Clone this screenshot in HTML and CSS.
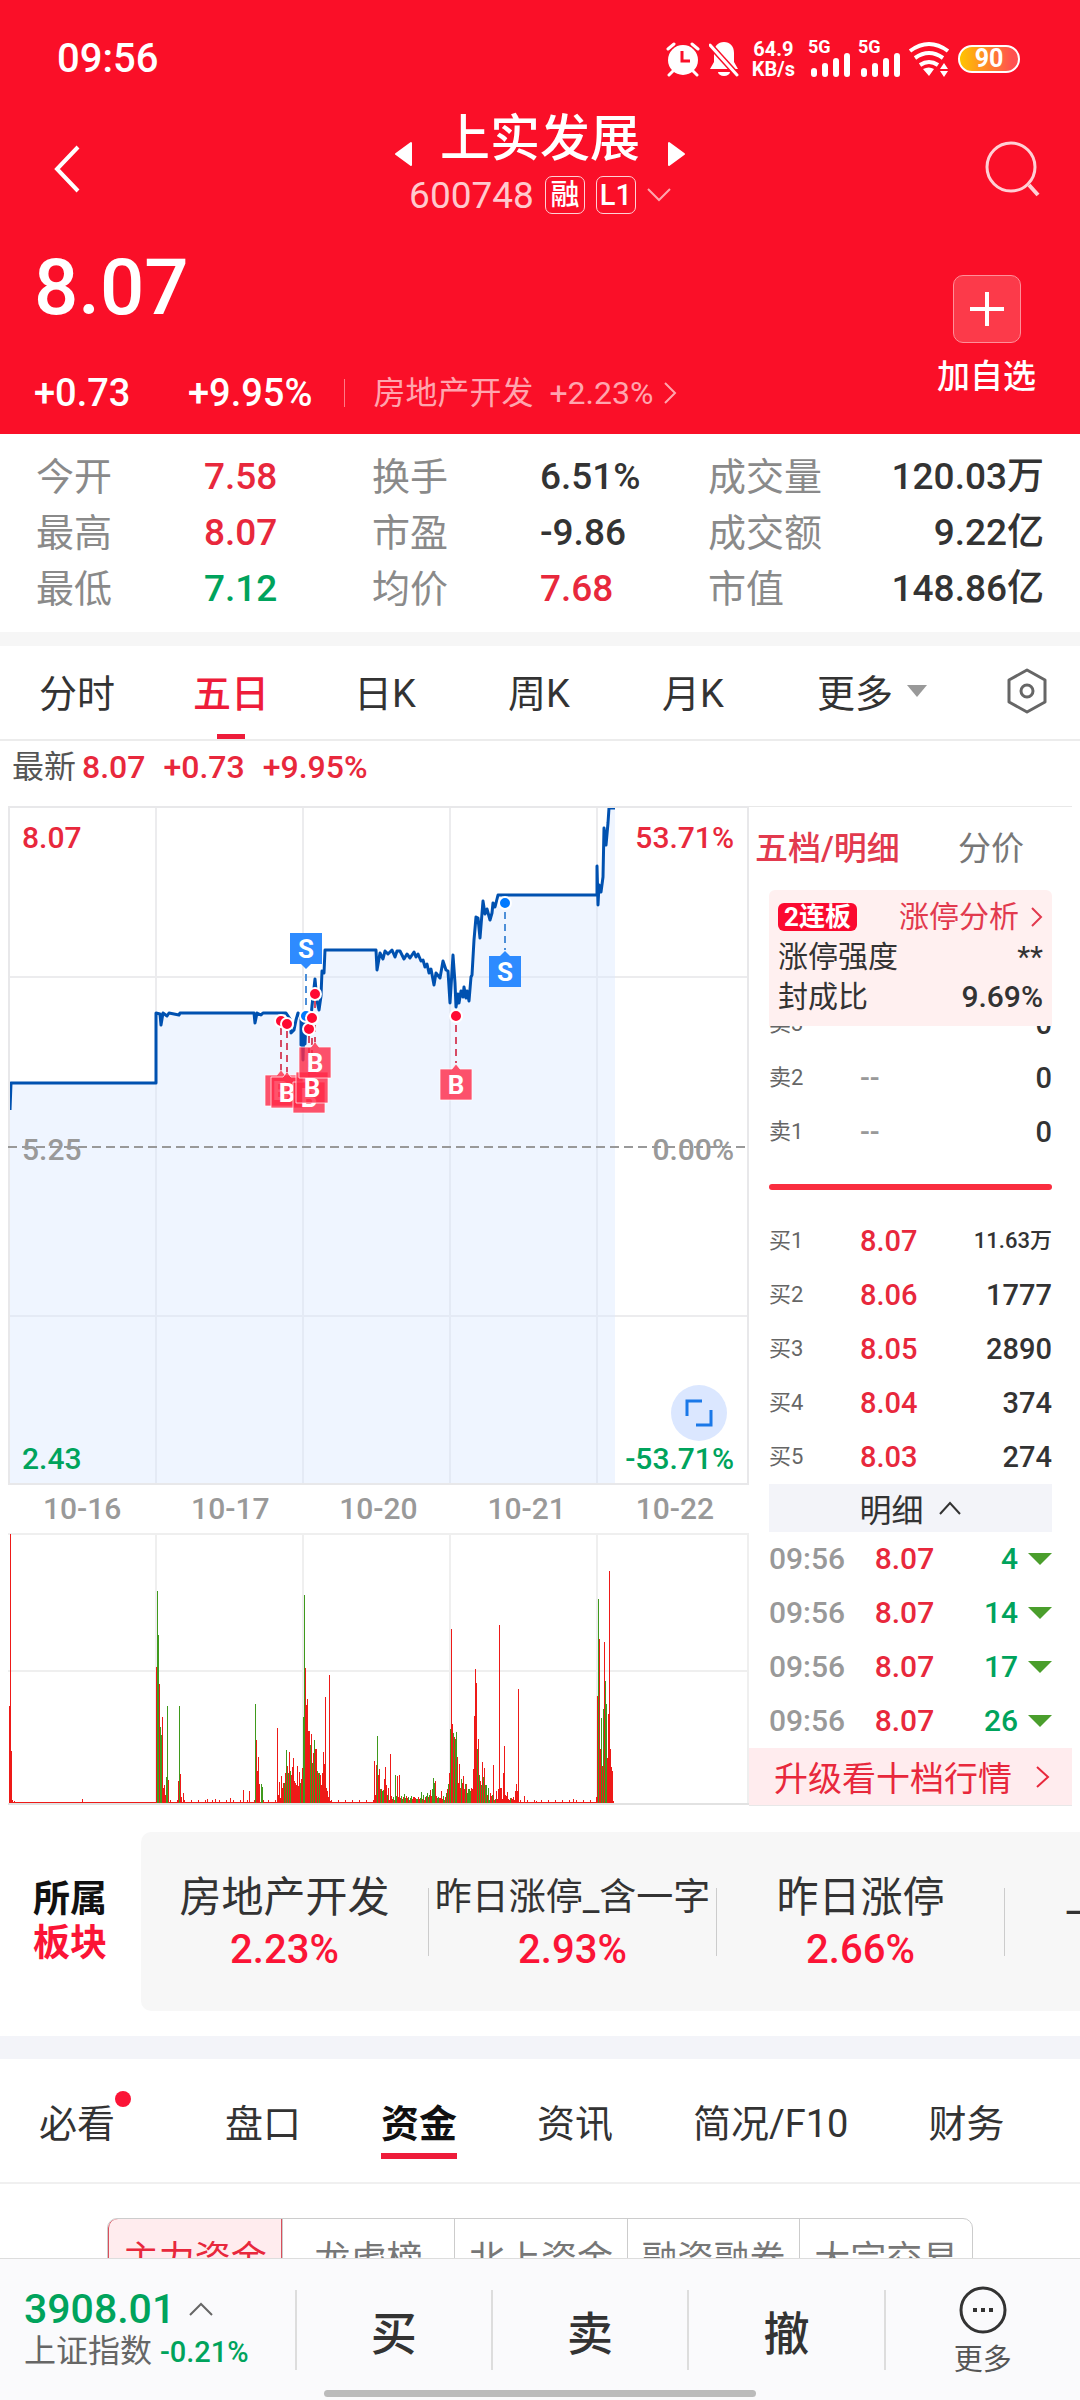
FILE: index.html
```html
<!DOCTYPE html>
<html lang="zh-CN">
<head>
    <meta charset="UTF-8">
    <meta name="viewport" content="width=device-width, initial-scale=1.0">
    <title>上实发展 600748</title>
    <link rel="stylesheet" href="styles.css">
</head>
<body>
    <header class="header">
        <div class="status-bar">
            <span class="clock">09:56</span>
            <div class="status-icons">
                <svg width="36" height="36" viewBox="0 0 36 36">
                    <circle cx="18" cy="19" r="15" fill="#fff"/>
                    <path d="M3 8l6-5M33 8l-6-5M8 30l-4 4M28 30l4 4" stroke="#fff" stroke-width="3" stroke-linecap="round"/>
                    <path d="M17 10v10h8" stroke="#fa0f28" stroke-width="3" fill="none"/>
                </svg>
                <svg width="30" height="36" viewBox="0 0 30 36">
                    <path d="M15 1c6 0 10 4 10 11v9l4 7H1l4-7v-9C5 5 9 1 15 1zM9 31h12a6 4 0 0 1-12 0z" fill="#fff"/>
                    <path d="M0 3l29 32" stroke="#fa0f28" stroke-width="6"/>
                    <path d="M1 4l27 30" stroke="#fff" stroke-width="3" stroke-linecap="round"/>
                </svg>
                <span class="speed">64.9<br>KB/s</span>
                <span class="signal">
                    <b>5G</b>
                    <svg width="42" height="24" viewBox="0 0 42 24"><path d="M6 21v-3M17 21v-8M28 21V8M39 21V3" stroke="#fff" stroke-width="6" stroke-linecap="round"/></svg>
                </span>
                <span class="signal">
                    <b>5G</b>
                    <svg width="42" height="24" viewBox="0 0 42 24"><path d="M6 21v-3M17 21v-8M28 21V8M39 21V3" stroke="#fff" stroke-width="6" stroke-linecap="round"/></svg>
                </span>
                <svg width="42" height="36" viewBox="0 0 42 36">
                    <path d="M2 10Q21-4 40 10M7 17q14-10 28 0M12 24q9-6 18 0" stroke="#fff" stroke-width="4" fill="none"/>
                    <path d="M15 28q6-3 11 0l-5 7zM32 28l4-6 4 6zM32 30l4 6 4-6z" fill="#fff"/>
                </svg>
                <span class="battery">90</span>
            </div>
        </div>

        <nav class="title-bar">
            <button class="icon-btn back" aria-label="返回">
                <svg width="26" height="48" viewBox="0 0 26 48"><path d="M24 2L3 24l21 22" stroke="#fff" stroke-width="4" fill="none"/></svg>
            </button>
            <div class="title">
                <div class="name-row">
                    <svg width="18" height="26" viewBox="0 0 18 26"><path d="M17 2v22L2 13z" fill="#fff" stroke="#fff" stroke-width="2" stroke-linejoin="round"/></svg>
                    <h1>上实发展</h1>
                    <svg width="18" height="26" viewBox="0 0 18 26"><path d="M1 2v22l15-11z" fill="#fff" stroke="#fff" stroke-width="2" stroke-linejoin="round"/></svg>
                </div>
                <div class="code-row">
                    <span class="code">600748</span>
                    <span class="badge">融</span>
                    <span class="badge">L1</span>
                    <svg width="24" height="14" viewBox="0 0 24 14"><path d="M1 1l11 11L23 1" stroke="#ffa5ae" stroke-width="2" fill="none"/></svg>
                </div>
            </div>
            <button class="icon-btn" aria-label="搜索">
                <svg width="56" height="58" viewBox="0 0 56 58"><circle cx="27" cy="27" r="24" stroke="#ffd0d5" stroke-width="3" fill="none"/><path d="M45 45l9 10" stroke="#ffd0d5" stroke-width="4"/></svg>
            </button>
        </nav>

        <div class="quote">
            <div>
                <div class="price">8.07</div>
                <div class="change">
                    <span class="diff">+0.73</span>
                    <span>+9.95%</span>
                    <a class="industry" href="#">
                        <span>房地产开发</span>
                        <span>+2.23%</span>
                        <svg width="14" height="22" viewBox="0 0 14 22"><path d="M2 1l10 10L2 21" stroke="#ffa5ae" stroke-width="2" fill="none"/></svg>
                    </a>
                </div>
            </div>
            <button class="add-btn">
                <span class="add-icon">
                    <svg width="34" height="34" viewBox="0 0 34 34"><path d="M17 0v34M0 17h34" stroke="#fff" stroke-width="4"/></svg>
                </span>
                加自选
            </button>
        </div>
    </header>

    <dl class="stats">
        <dt>今开</dt><dd class="up">7.58</dd>
        <dt>换手</dt><dd>6.51%</dd>
        <dt>成交量</dt><dd class="right">120.03万</dd>
        <dt>最高</dt><dd class="up">8.07</dd>
        <dt>市盈</dt><dd>-9.86</dd>
        <dt>成交额</dt><dd class="right">9.22亿</dd>
        <dt>最低</dt><dd class="down">7.12</dd>
        <dt>均价</dt><dd class="up">7.68</dd>
        <dt>市值</dt><dd class="right">148.86亿</dd>
    </dl>

    <nav class="period-tabs">
        <button>分时</button>
        <button class="active">五日</button>
        <button>日K</button>
        <button>周K</button>
        <button>月K</button>
        <button class="more">更多
            <svg width="20" height="14" viewBox="0 0 20 14"><path d="M0 1h20L10 13z" fill="#999"/></svg>
        </button>
        <button class="settings" aria-label="设置">
            <svg width="42" height="46" viewBox="0 0 42 46"><path d="M21 2l18 10v22L21 44 3 34V12z" stroke="#666" stroke-width="3" fill="none" stroke-linejoin="round"/><circle cx="21" cy="23" r="6" stroke="#666" stroke-width="3" fill="none"/></svg>
        </button>
    </nav>

    <div class="latest"><span>最新</span><span class="up">8.07</span><span class="up">+0.73</span><span class="up">+9.95%</span></div>

    <main class="market">
        <section class="charts">
            <div class="price-chart">
                <svg viewBox="0 0 741 679">
                    <defs>
                        <g id="buy">
                            <path d="M-16 1h12l4-5 4 5h12v31h-32z" fill="#ff2846" fill-opacity=".8" stroke="#fff" stroke-opacity=".7"/>
                            <text x="0" y="26" class="tag-text">B</text>
                        </g>
                        <g id="sell">
                            <rect x="-16" y="0" width="32" height="31" fill="#2e8bff"/>
                            <text x="0" y="25" class="tag-text">S</text>
                        </g>
                    </defs>
                    <path d="M0 171H741M0 510H741M148 0V679M295 0V679M442 0V679M589 0V679" stroke="#ececee" stroke-width="2"/>
                    <path id="price-area" fill="#d8e8ff" fill-opacity=".42"/>
                    <path id="price-line" fill="none" stroke="#0051b0" stroke-width="3" stroke-linejoin="round"/>
                    <rect x="1" y="1" width="739" height="677" fill="none" stroke="#e8e8ea" stroke-width="2"/>
                    <path d="M0 341H741" stroke="#999" stroke-width="2" stroke-dasharray="9 5"/>
                    <path d="M273 222v44M279 225v44M301 230v42M304 220v46M307 195v46M448 219v38" stroke="#d64a64" stroke-width="2" stroke-dasharray="7 5"/>
                    <path d="M298 168v38M497 106v38" stroke="#4d8fd8" stroke-width="2" stroke-dasharray="7 5"/>
                    <g stroke="#fff" stroke-width="2">
                        <g fill="#007aff">
                            <circle cx="298" cy="210" r="6"/>
                            <circle cx="497" cy="97" r="6"/>
                        </g>
                        <g fill="#ff0a32">
                            <circle cx="273" cy="215" r="6"/>
                            <circle cx="279" cy="218" r="6"/>
                            <circle cx="301" cy="223" r="6"/>
                            <circle cx="304" cy="212" r="6"/>
                            <circle cx="307" cy="188" r="6"/>
                            <circle cx="448" cy="210" r="6"/>
                        </g>
                    </g>
                    <use href="#buy" x="273" y="268"/>
                    <use href="#buy" x="279" y="270"/>
                    <use href="#buy" x="301" y="275"/>
                    <use href="#buy" x="304" y="265"/>
                    <use href="#buy" x="307" y="240"/>
                    <use href="#buy" x="448" y="262"/>
                    <use href="#sell" x="298" y="127"/>
                    <path d="M293 158h10l-5 5z" fill="#2e8bff"/>
                    <use href="#sell" x="497" y="150"/>
                    <path d="M492 150h10l-5-5z" fill="#2e8bff"/>
                </svg>
                <span class="axis top left up">8.07</span>
                <span class="axis top right up">53.71%</span>
                <span class="axis middle left">5.25</span>
                <span class="axis middle right">0.00%</span>
                <span class="axis bottom left down">2.43</span>
                <span class="axis bottom right down">-53.71%</span>
                <button class="expand" aria-label="全屏">
                    <svg width="28" height="28" viewBox="0 0 28 28"><path d="M2 17V2h15M26 11v15H11" stroke="#1a78e8" stroke-width="3" fill="none"/></svg>
                </button>
            </div>
            <div class="dates"><span>10-16</span><span>10-17</span><span>10-20</span><span>10-21</span><span>10-22</span></div>
            <svg class="volume-chart" viewBox="0 0 741 272">
                <path d="M0 1H741M0 138H741M148 0V271M295 0V271M442 0V271M589 0V271M740 0V271" stroke="#efefef" stroke-width="2"/>
                <path d="M0 271H741" stroke="#e2e2e2" stroke-width="2"/>
                <path id="volume-up" stroke="#ee1a18" stroke-width="1"/>
                <path id="volume-down" stroke="#3f9a1c" stroke-width="1"/>
            </svg>
        </section>

        <aside class="book">
            <div class="book-tabs">
                <button class="active">五档/明细</button>
                <button>分价</button>
            </div>
            <div class="limit-card">
                <a class="limit-row" href="#">
                    <span class="pill">2连板</span>
                    <span class="limit-link">涨停分析
                        <svg width="12" height="20" viewBox="0 0 12 20"><path d="M1 1l9 9-9 9" stroke="#e23a4e" stroke-width="2" fill="none"/></svg>
                    </span>
                </a>
                <div class="limit-row"><span>涨停强度</span><span>**</span></div>
                <div class="limit-row"><span>封成比</span><span class="num">9.69%</span></div>
            </div>
            <div class="sells">
                <table class="orders">
                    <tr><th>卖3</th><td class="none">--</td><td>0</td></tr>
                    <tr><th>卖2</th><td class="none">--</td><td>0</td></tr>
                    <tr><th>卖1</th><td class="none">--</td><td>0</td></tr>
                </table>
            </div>
            <div class="ratio"></div>
            <table class="orders">
                <tr><th>买1</th><td class="up">8.07</td><td class="small">11.63万</td></tr>
                <tr><th>买2</th><td class="up">8.06</td><td>1777</td></tr>
                <tr><th>买3</th><td class="up">8.05</td><td>2890</td></tr>
                <tr><th>买4</th><td class="up">8.04</td><td>374</td></tr>
                <tr><th>买5</th><td class="up">8.03</td><td>274</td></tr>
            </table>
            <button class="detail-btn">明细
                <svg width="24" height="14" viewBox="0 0 24 14"><path d="M2 13L12 2l10 11" stroke="#333" stroke-width="2" fill="none"/></svg>
            </button>
            <table class="ticks">
                <tr><td>09:56</td><td class="up">8.07</td><td class="down">4</td></tr>
                <tr><td>09:56</td><td class="up">8.07</td><td class="down">14</td></tr>
                <tr><td>09:56</td><td class="up">8.07</td><td class="down">17</td></tr>
                <tr><td>09:56</td><td class="up">8.07</td><td class="down">26</td></tr>
            </table>
            <a class="upgrade" href="#">升级看十档行情
                <svg width="14" height="24" viewBox="0 0 14 24"><path d="M1 2l11 10L1 22" stroke="#e8283c" stroke-width="2" fill="none"/></svg>
            </a>
        </aside>
    </main>

    <section class="sectors">
        <h2>所属<br><em>板块</em></h2>
        <div class="sector-list">
            <a href="#"><span>房地产开发</span><b>2.23%</b></a>
            <a href="#"><span class="long">昨日涨停_含一字</span><b>2.93%</b></a>
            <a href="#"><span>昨日涨停</span><b>2.66%</b></a>
            <a href="#"><span>上海板块</span></a>
        </div>
    </section>

    <nav class="info-tabs">
        <button class="dot">必看</button>
        <button>盘口</button>
        <button class="active">资金</button>
        <button>资讯</button>
        <button>简况/F10</button>
        <button>财务</button>
    </nav>

    <div class="segments">
        <button class="active">主力资金</button>
        <button>龙虎榜</button>
        <button>北上资金</button>
        <button>融资融券</button>
        <button>大宗交易</button>
    </div>

    <footer class="trade-bar">
        <div class="trade-items">
            <a class="index" href="#">
                <span class="index-value">3908.01
                    <svg width="24" height="14" viewBox="0 0 24 14"><path d="M1 13L12 2l11 11" stroke="#666" stroke-width="2" fill="none"/></svg>
                </span>
                <span class="index-name">上证指数 <b>-0.21%</b></span>
            </a>
            <button>买</button>
            <button>卖</button>
            <button>撤</button>
            <button class="trade-more">
                <svg width="48" height="48" viewBox="0 0 48 48"><circle cx="24" cy="24" r="22" stroke="#333" stroke-width="3" fill="none"/><path d="M14 22h4v4h-4zM22 22h4v4h-4zM30 22h4v4h-4z" fill="#333"/></svg>
                更多
            </button>
        </div>
        <div class="home-indicator"></div>
    </footer>

    <script>
        const prices = [
            [1,304],[2,277],[147,277],[147,207],[151,208],[152,219],[154,207],[158,210],[160,207],[170,209],[171,207],
            [245,207],[246,217],[248,207],[252,209],[254,207],[277,207],[281,213],[282,227],[285,224],[287,214],[289,207],
            [292,211],[292,239],[293,208],[294,254],[295,216],[296,238],[297,214],[301,222],[303,200],[306,173],[308,195],[310,204],
            [312,190],[313,165],[315,167],[316,144],[367,144],[368,164],[371,147],[374,153],[376,145],[379,148],[383,144],
            [386,151],[388,145],[391,145],[395,153],[398,148],[401,152],[405,146],[407,151],[409,148],[412,155],[414,154],
            [416,161],[418,158],[420,167],[422,163],[425,179],[427,167],[431,172],[434,155],[437,164],[439,165],[441,197],
            [444,149],[446,177],[447,201],[449,188],[450,197],[452,185],[454,191],[455,181],[457,192],[458,185],[460,195],
            [462,171],[463,169],[465,134],[467,111],[469,112],[471,132],[474,95],[476,108],[478,103],[481,114],[483,107],
            [484,97],[486,101],[489,89],[588,89],[588,60],[589,99],[590,79],[592,86],[594,71],[595,22],[597,39],[599,17],
            [600,2],[606,2]
        ];
        const line = 'M' + prices.map(([x, y]) => `${x + 1} ${y}`).join('L');
        document.getElementById('price-line').setAttribute('d', line);
        document.getElementById('price-area').setAttribute('d', line + 'V679H2Z');

        // x position: volume height, for rising and falling minutes
        const up = {
            0:97, 1:269, 2:52, 3:3, 5:2, 73:4, 147:136, 150:119, 153:86, 154:15, 155:18, 156:8, 159:23, 169:22, 171:29, 172:6, 174:10,
            198:4, 206:4, 221:5, 234:13, 240:12, 247:63, 248:32, 249:46, 250:19, 254:3, 268:75, 269:8, 270:21, 272:27, 273:15, 274:20, 276:30,
            278:37, 280:51, 282:28, 283:36, 284:45, 285:22, 286:20, 287:18, 288:37, 289:17, 290:31, 292:24, 293:35, 296:135,
            297:98, 298:104, 299:72, 300:72, 302:69, 304:50, 306:54, 307:54, 309:30, 311:28, 312:18, 313:30, 314:51, 315:39, 316:106,
            317:15, 318:12, 319:6, 320:128, 321:2, 365:42, 366:8, 367:38, 369:28, 370:34, 372:14, 375:24, 376:36, 377:18, 379:15, 381:49,
            388:27, 390:28, 398:5, 405:6, 410:4, 416:6, 421:13, 426:22, 430:5, 432:12, 436:6, 438:14, 440:30, 442:174,
            443:79, 445:66, 448:46, 449:20, 450:39, 451:15, 453:20, 454:27, 455:14, 457:19, 462:15, 463:14, 464:34, 465:87, 466:134,
            467:120, 469:64, 471:22, 473:41, 475:35, 478:8, 481:10, 484:38, 487:12, 489:14, 490:178, 491:15, 492:15, 494:30, 495:57, 496:8,
            498:11, 499:4, 502:5, 504:6, 506:12, 507:19, 508:12, 509:114, 515:7, 527:2, 564:4, 587:6, 588:107, 590:164, 591:54, 593:37, 595:161,
            598:45, 599:89, 600:232, 601:54, 602:36, 603:32, 604:2
        };
        const down = {
            148:212, 149:168, 151:76, 152:68, 157:26, 158:97, 170:97, 246:99, 252:19, 253:16, 275:20, 277:53, 279:30, 281:32,
            291:20, 294:86, 295:208, 301:58, 303:40, 305:63, 308:32, 310:30, 368:67, 371:14, 373:12, 374:13, 378:8, 386:28, 392:7,
            395:9, 401:5, 407:4, 412:11, 414:8, 418:10, 420:8, 423:14, 424:25, 425:20, 428:5, 434:7, 437:10, 439:19, 441:74, 444:70,
            446:64, 447:71, 452:24, 456:19, 458:10, 459:14, 460:14, 461:12, 468:54, 470:28, 472:18, 474:26, 476:18, 477:18, 479:15,
            483:8, 486:4, 589:204, 592:85, 594:94, 596:122, 597:99
        };
        // quiet minutes still trade a little
        for (let x = 4; x < 605; x++) {
            if (up[x] || down[x]) continue;
            if (x > 268 && x < 320 || x > 368 && x < 508) {
                (x % 3 ? up : down)[x] = 3 + x * 7 % 5;
            } else {
                up[x] = x % 7 ? 1 : (x > 160 ? 3 : 1);
            }
        }
        const bars = data => Object.entries(data).map(([x, h]) => `M${+x + 1.5} 270v-${h}`).join('');
        document.getElementById('volume-up').setAttribute('d', bars(up));
        document.getElementById('volume-down').setAttribute('d', bars(down));
    </script>
</body>
</html>
```
FILE: styles.css
```css
* {
    box-sizing: border-box;
}

body {
    margin: 0;
    font-family: Roboto, "Noto Sans CJK SC", sans-serif;
    background-color: #fff;
    color: #333;
    padding-bottom: 142px;
}

button {
    border: none;
    background: none;
    padding: 0;
    font: inherit;
    color: inherit;
    cursor: pointer;
}

a {
    color: inherit;
    text-decoration: none;
}

svg {
    display: block;
    flex: none;
}

.up {
    color: #e8283c;
}

.down {
    color: #00a35c;
}

.header {
    background-color: #fa0f28;
    color: #fff;
    padding-bottom: 17px;
}

.status-bar {
    display: flex;
    justify-content: space-between;
    align-items: center;
    padding: 35px 60px 24px 57px;
    line-height: 48px;
}

.clock {
    font-size: 40px;
    font-weight: 500;
}

.status-icons {
    display: flex;
    align-items: center;
    gap: 8px;
}

.speed {
    font-size: 20px;
    font-weight: 700;
    line-height: 20px;
    text-align: center;
    padding: 0 5px;
}

.signal b {
    display: block;
    font-size: 18px;
    line-height: 12px;
}

.battery {
    width: 62px;
    height: 28px;
    border: 2px solid #fff;
    border-radius: 14px;
    background: linear-gradient(90deg, #ffc400, #ff5050 90%);
    font-size: 25px;
    font-weight: 700;
    line-height: 24px;
    text-align: center;
}

.title-bar {
    display: flex;
    justify-content: space-between;
    align-items: center;
    height: 112px;
    padding: 0 40px 0 54px;
}

.icon-btn {
    width: 56px;
    padding-top: 12px;
}

.back {
    width: 42px;
}

.name-row {
    display: flex;
    justify-content: center;
    align-items: flex-end;
    gap: 28px;
    height: 64px;
}

.name-row svg {
    margin-bottom: 4px;
}

.title h1 {
    margin: 0;
    font-size: 50px;
    font-weight: 500;
    line-height: 64px;
}

.code-row {
    display: flex;
    justify-content: center;
    align-items: center;
    gap: 11px;
    height: 48px;
}

.code {
    font-size: 37px;
    color: #ffc9ce;
}

.badge {
    width: 40px;
    height: 38px;
    border: 1px solid #ffd0d5;
    border-radius: 7px;
    font-size: 29px;
    font-weight: 500;
    line-height: 36px;
    text-align: center;
}

.quote {
    display: flex;
    justify-content: space-between;
    padding: 20px 44px 0 34px;
}

.price {
    font-size: 78px;
    font-weight: 500;
    line-height: 98px;
}

.change {
    display: flex;
    align-items: center;
    margin-top: 32px;
    font-size: 38px;
    font-weight: 500;
    line-height: 48px;
}

.diff {
    width: 154px;
}

.industry {
    display: flex;
    align-items: center;
    gap: 16px;
    margin-left: 32px;
    padding-left: 28px;
    border-left: 1px solid #ff7a86;
    font-size: 32px;
    font-weight: 400;
    line-height: 28px;
    color: #ffa5ae;
}

.industry svg {
    margin-left: -6px;
}

.add-btn {
    display: flex;
    flex-direction: column;
    align-items: center;
    gap: 10px;
    padding-top: 36px;
    font-size: 33px;
    font-weight: 500;
    line-height: 48px;
}

.add-icon {
    display: flex;
    justify-content: center;
    align-items: center;
    width: 68px;
    height: 68px;
    border: 1px solid #ff8f99;
    border-radius: 10px;
    background-color: #fc3a4a;
}

.stats {
    display: grid;
    grid-template-columns: repeat(6, 1fr);
    margin: 0;
    padding: 15px 36px;
    line-height: 56px;
    border-bottom: 14px solid #f6f6f6;
}

.stats dt {
    font-size: 38px;
    color: #8a8a8a;
}

.stats dd {
    margin: 0;
    font-size: 37px;
    font-weight: 500;
    white-space: nowrap;
}

.stats .right {
    display: flex;
    justify-content: flex-end;
}

.period-tabs {
    display: flex;
    height: 95px;
    border-bottom: 2px solid #ececec;
    font-size: 38px;
}

.period-tabs button {
    flex: 154;
    padding-bottom: 4px;
}

.period-tabs .active {
    color: #ee1c3a;
    font-weight: 500;
    background: linear-gradient(#ee1c3a, #ee1c3a) bottom / 28px 5px no-repeat;
}

.period-tabs .more {
    display: flex;
    justify-content: center;
    align-items: center;
    gap: 14px;
    flex: 204;
}

.period-tabs .settings {
    display: flex;
    justify-content: center;
    align-items: center;
    flex: 106;
}

.latest {
    display: flex;
    gap: 18px;
    padding: 0 12px;
    font-size: 32px;
    font-weight: 500;
    line-height: 52px;
    margin-bottom: 13px;
}

.latest span:first-child {
    margin-right: -12px;
    font-weight: 400;
    color: #555;
}

.market {
    display: flex;
    align-items: flex-start;
    padding: 0 8px;
}

.charts {
    flex: 1;
}

.price-chart {
    position: relative;
}

.price-chart > svg,
.volume-chart {
    width: 100%;
}

.tag-text {
    font-size: 26px;
    font-weight: 700;
    fill: #fff;
    text-anchor: middle;
}

.axis {
    position: absolute;
    font-size: 30px;
    font-weight: 500;
    line-height: 36px;
}

.axis.top {
    top: 14px;
}

.axis.middle {
    top: 50%;
    margin-top: -14px;
    color: #999;
}

.axis.bottom {
    bottom: 8px;
}

.axis.left {
    left: 14px;
}

.axis.right {
    right: 15px;
}

.expand {
    position: absolute;
    right: 22px;
    bottom: 44px;
    display: flex;
    justify-content: center;
    align-items: center;
    width: 56px;
    height: 56px;
    border-radius: 50%;
    background-color: #dbe7ff;
}

.dates {
    display: flex;
    justify-content: space-around;
    font-size: 30px;
    font-weight: 500;
    line-height: 48px;
    color: #999;
}

.book {
    width: 323px;
    border-top: 1px solid #e8e8e8;
    border-bottom: 1px solid #e8e8e8;
}

.book-tabs {
    display: flex;
    justify-content: space-between;
    padding: 0 48px 0 6px;
    font-size: 33px;
    line-height: 83px;
    color: #777;
}

.book-tabs .active {
    color: #e23a4e;
    font-weight: 500;
}

.limit-card {
    margin: 0 20px;
    padding: 7px 9px 9px;
    border-radius: 6px 6px 0 0;
    background-color: #fff0f0;
    font-size: 30px;
}

.limit-row {
    display: flex;
    justify-content: space-between;
    align-items: center;
    line-height: 40px;
}

.limit-row .num {
    font-weight: 500;
}

.pill {
    padding: 0 6px;
    border-radius: 6px;
    background-color: #fb0a30;
    color: #fff;
    font-size: 26px;
    font-weight: 700;
    line-height: 28px;
}

.limit-link {
    display: flex;
    align-items: center;
    gap: 12px;
    color: #e23a4e;
}

/* the list is scrolled, its first row shows only the lower part */
.sells {
    display: flex;
    flex-direction: column;
    justify-content: flex-end;
    height: 133px;
    overflow: hidden;
}

.orders,
.ticks {
    margin: 0 20px;
    width: 283px;
    border-collapse: collapse;
    font-weight: 500;
}

.orders td,
.orders th,
.ticks td {
    height: 54px;
    padding: 0;
    line-height: 54px;
}

.orders th {
    width: 91px;
    font-size: 22px;
    font-weight: 400;
    text-align: left;
    color: #666;
}

.orders td {
    font-size: 29px;
}

.orders td:last-child {
    text-align: right;
}

.orders .none {
    color: #999;
}

.orders td.small {
    font-size: 22px;
}

.ratio {
    height: 6px;
    margin: 25px 20px 24px;
    border-radius: 3px;
    background-color: #fa2d3f;
}

.detail-btn {
    display: flex;
    justify-content: center;
    align-items: center;
    gap: 14px;
    width: 283px;
    height: 48px;
    margin: 0 20px;
    background-color: #f3f4f9;
    font-size: 32px;
}

.ticks {
    font-size: 30px;
    color: #999;
}

.ticks td:last-child {
    text-align: right;
}

.ticks td:last-child::after {
    content: "";
    display: inline-block;
    margin-left: 10px;
    border: 12px solid transparent;
    border-top-color: #4a9e2c;
    border-bottom: none;
    vertical-align: 4px;
}

.upgrade {
    display: flex;
    justify-content: space-between;
    align-items: center;
    height: 57px;
    padding: 0 22px 0 25px;
    background-color: #ffecee;
    font-size: 34px;
    color: #e8283c;
}

.sectors {
    display: flex;
    align-items: center;
    padding: 26px 0 25px 33px;
    border-bottom: 23px solid #f3f4f9;
    overflow: hidden;
}

.sectors h2 {
    flex: none;
    width: 108px;
    margin: 0;
    font-size: 37px;
    line-height: 44px;
    color: #111;
}

.sectors em {
    font-style: normal;
    color: #fb1436;
}

.sector-list {
    display: flex;
    flex: 1;
    min-width: 0;
    height: 179px;
    border-radius: 10px 0 0 10px;
    background-color: #f7f7f7;
    overflow: hidden;
}

.sector-list a {
    flex: 0 0 288px;
    display: flex;
    flex-direction: column;
    align-items: center;
    height: 68px;
    margin-top: 56px;
    border-right: 1px solid #ccc;
    white-space: nowrap;
}

.sector-list span {
    margin-top: -16px;
    font-size: 42px;
    line-height: 52px;
}

.sector-list .long {
    font-size: 37px;
}

.sector-list b {
    font-size: 40px;
    font-weight: 500;
    line-height: 52px;
    color: #fb1436;
}

.info-tabs {
    display: flex;
    gap: 80px;
    height: 125px;
    padding: 28px 39px 23px;
    border-bottom: 2px solid #f0f0f0;
    font-size: 38px;
    white-space: nowrap;
}

.info-tabs button {
    border-bottom: 6px solid transparent;
}

.info-tabs .active {
    font-weight: 700;
    color: #111;
    border-color: #ee1c3a;
}

.info-tabs .dot {
    position: relative;
    margin-right: 30px;
}

.info-tabs .dot::after {
    content: "";
    position: absolute;
    top: 4px;
    right: -16px;
    width: 16px;
    height: 16px;
    border-radius: 50%;
    background-color: #fb1436;
}

.segments {
    display: flex;
    margin: 34px 107px 0;
    height: 76px;
    border: 1px solid #ccc;
    border-radius: 10px;
    overflow: hidden;
    font-size: 36px;
    color: #777;
}

.segments button {
    flex: 1;
    border-left: 1px solid #ccc;
    white-space: nowrap;
}

.segments .active {
    margin: -1px 0;
    border: 1px solid #d8505c;
    border-radius: 10px 0 0 10px;
    background-color: #ffecee;
    color: #e8283c;
}

.trade-bar {
    position: fixed;
    left: 0;
    right: 0;
    bottom: 0;
    height: 142px;
    padding-top: 31px;
    border-top: 1px solid #ddd;
    background-color: #fafafc;
}

.trade-items {
    display: grid;
    grid-template-columns: 3fr 2fr 2fr 2fr 2fr;
    grid-template-rows: 80px;
}

.trade-items button {
    border-left: 2px solid #ddd;
    font-size: 46px;
    font-weight: 500;
}

.index {
    display: flex;
    flex-direction: column;
    justify-content: center;
    padding-left: 24px;
    font-size: 32px;
    white-space: nowrap;
    line-height: 42px;
    color: #666;
}

.index-value {
    display: flex;
    align-items: center;
    gap: 14px;
    font-size: 41px;
    color: #00a35c;
    font-weight: 500;
}

.index-name b {
    font-size: 29px;
    font-weight: 500;
    color: #00a35c;
}

.trade-items .trade-more {
    display: flex;
    flex-direction: column;
    justify-content: center;
    align-items: center;
    gap: 6px;
    padding-top: 6px;
    font-size: 29px;
    font-weight: 400;
    line-height: 40px;
    color: #555;
}

.home-indicator {
    width: 40%;
    height: 7px;
    margin: 20px auto 0;
    border-radius: 4px;
    background-color: #bbb;
}
```
